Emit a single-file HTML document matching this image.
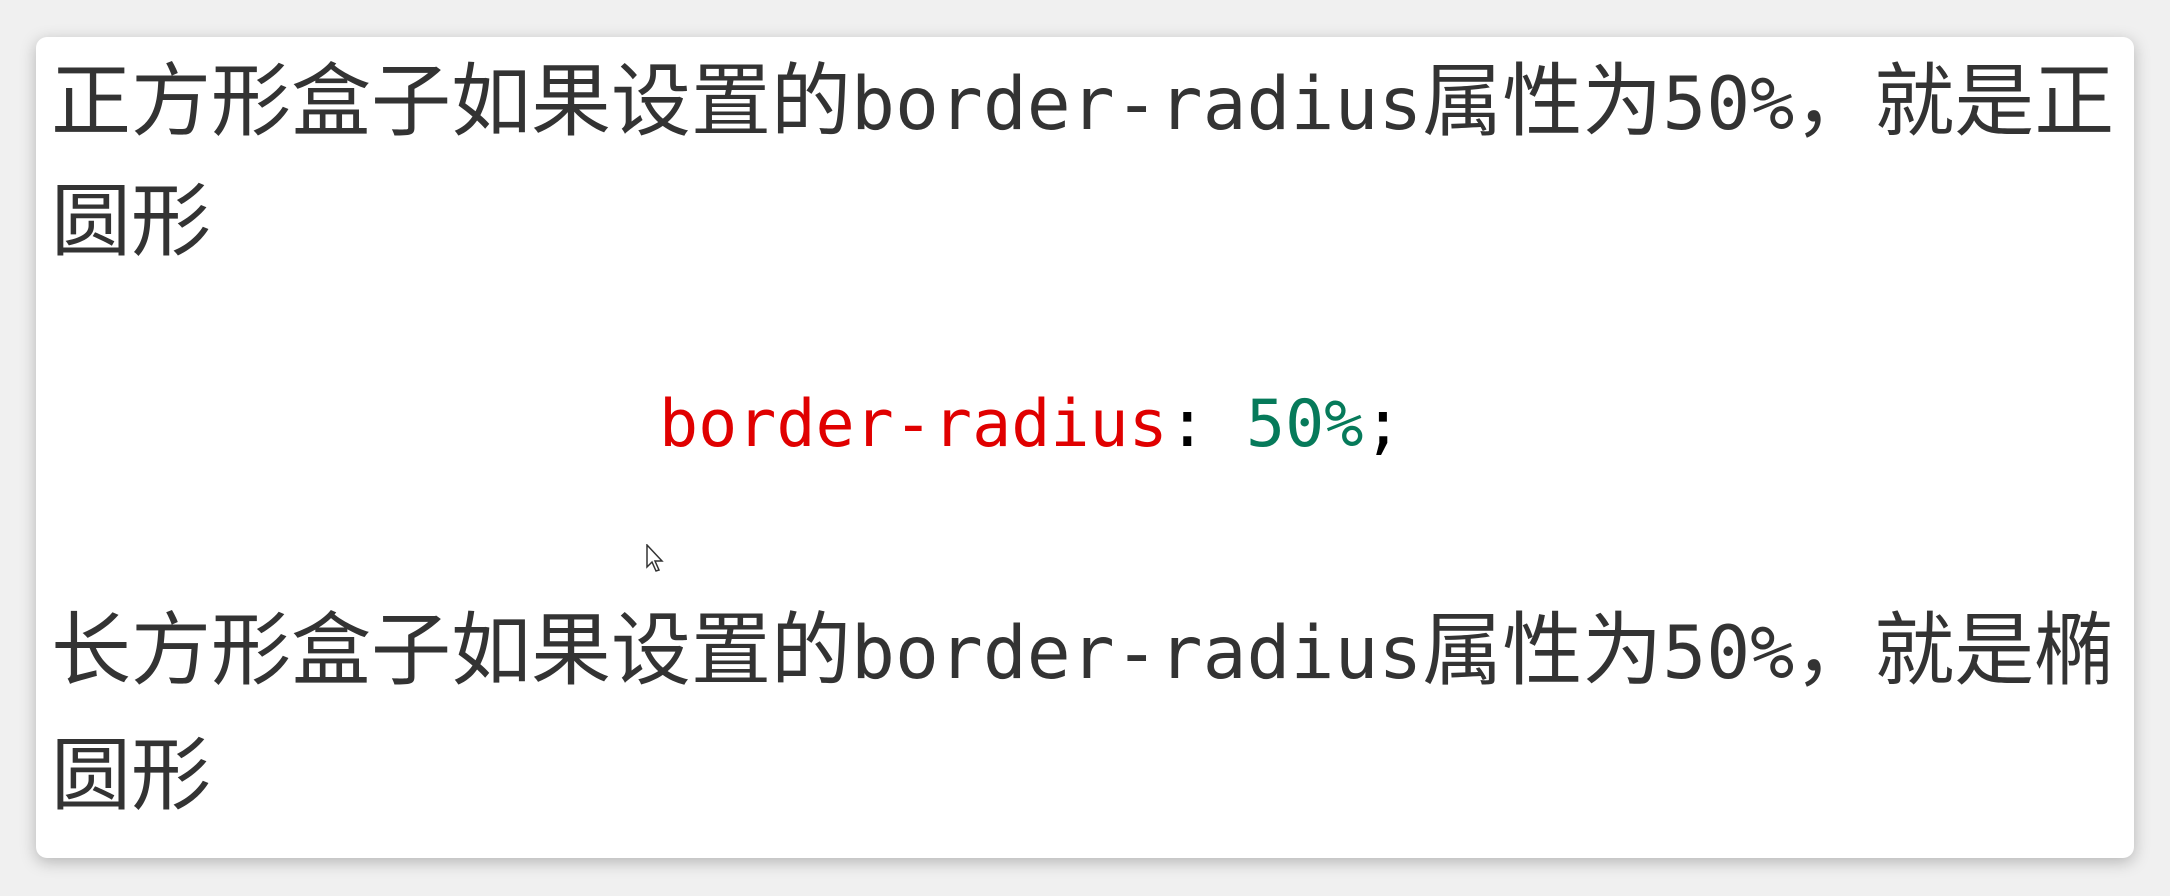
<!DOCTYPE html>
<html><head><meta charset="utf-8"><style>
html,body{margin:0;padding:0;width:2170px;height:896px;background:#f0f0f0;overflow:hidden}
.card{position:absolute;left:36px;top:37px;width:2098px;height:821px;background:#fff;border-radius:11px;box-shadow:0 4px 16px rgba(0,0,0,.25)}
.l{position:absolute;left:51px;white-space:nowrap;font-family:"Liberation Sans","Noto Sans CJK SC",sans-serif;font-size:80px;color:#333;line-height:120px;height:120px}
.m{font-family:"DejaVu Sans Mono","Liberation Mono",monospace;font-size:73px}
.code{position:absolute;left:659px;top:385px;white-space:nowrap;font-family:"DejaVu Sans Mono","Liberation Mono",monospace;font-size:65px;line-height:80px;color:#000}
</style></head><body>
<div class="card"></div>
<div class="l" style="top:42px">正方形盒子如果设置的<span class="m">border-radius</span>属性为<span class="m">50%</span>，就是正</div>
<div class="l" style="top:162px">圆形</div>
<div class="code"><span style="color:#e00000">border-radius</span>: <span style="color:#067a5a">50%</span>;</div>
<div class="l" style="top:591px">长方形盒子如果设置的<span class="m">border-radius</span>属性为<span class="m">50%</span>，就是椭</div>
<div class="l" style="top:716px">圆形</div>
<svg style="position:absolute;left:646px;top:544px" width="22" height="30" viewBox="0 0 22 30"><path d="M1 1 L1 23 L6 18 L10 27 L13 26 L9 17 L16 17 Z" fill="#fff" stroke="#333" stroke-width="1.5"/></svg>
</body></html>
